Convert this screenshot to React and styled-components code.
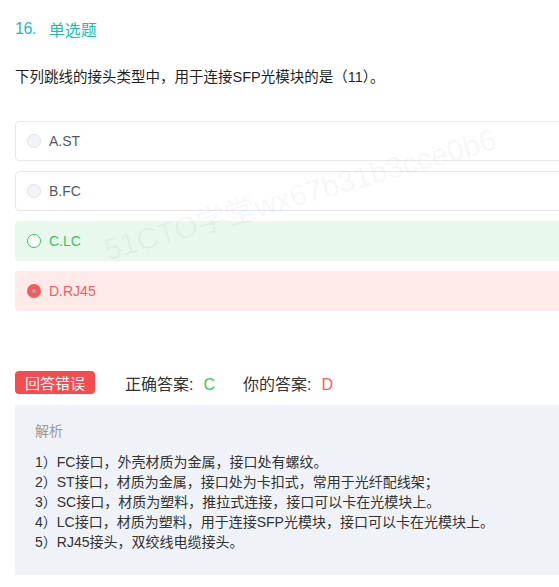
import React from "react";
import styled, { createGlobalStyle } from "styled-components";

const GlobalStyle = createGlobalStyle`
  html, body {
    margin: 0;
    padding: 0;
    background: #fff;
    overflow: hidden;
  }
  body {
    font-family: "Liberation Sans", "Noto Sans CJK SC", sans-serif;
  }
`;

const options = [
  { key: "A", label: "A.ST", state: "idle" },
  { key: "B", label: "B.FC", state: "idle" },
  { key: "C", label: "C.LC", state: "right" },
  { key: "D", label: "D.RJ45", state: "wrong" },
];

const analysis = [
  "1）FC接口，外壳材质为金属，接口处有螺纹。",
  "2）ST接口，材质为金属，接口处为卡扣式，常用于光纤配线架；",
  "3）SC接口，材质为塑料，推拉式连接，接口可以卡在光模块上。",
  "4）LC接口，材质为塑料，用于连接SFP光模块，接口可以卡在光模块上。",
  "5）RJ45接头，双绞线电缆接头。",
];

const App = () => {
  return (
    <>
      <GlobalStyle />
      <Page>
        <Title>
          <span className="num">16.</span>
          <span>单选题</span>
        </Title>
        <Question>下列跳线的接头类型中，用于连接SFP光模块的是（11）。</Question>
        <OptionList>
          {options.map((o) => (
            <Option key={o.key} state={o.state}>
              <Radio state={o.state} />
              <span>{o.label}</span>
            </Option>
          ))}
        </OptionList>
        <ResultRow>
          <Badge>回答错误</Badge>
          <Answer>
            正确答案:<Mark color="#3cc35a">C</Mark>
          </Answer>
          <Answer>
            你的答案:<Mark color="#f65c5e">D</Mark>
          </Answer>
        </ResultRow>
        <Analysis>
          <h4>解析</h4>
          {analysis.map((line) => (
            <p key={line}>{line}</p>
          ))}
        </Analysis>
        <Watermark>51CTO学堂wx67b31b3cce0b6</Watermark>
      </Page>
    </>
  );
};

const Page = styled.div`
  position: relative;
  width: 780px;
  padding: 17px 0 12px 15px;
  color: #222;
`;

const Title = styled.div`
  display: flex;
  align-items: center;
  gap: 13px;
  height: 24px;
  font-size: 16px;
  color: #1dbcb3;
  .num {
    font-family: "Liberation Sans", sans-serif;
    letter-spacing: -0.5px;
  }
`;

const Question = styled.div`
  margin-top: 26px;
  font-size: 14.5px;
  line-height: 20px;
  color: #1f1f1f;
`;

const OptionList = styled.div`
  margin-top: 34px;
  display: flex;
  flex-direction: column;
  gap: 10px;
`;

const Option = styled.div`
  box-sizing: border-box;
  height: 40px;
  display: flex;
  align-items: center;
  gap: 8px;
  padding-left: 11px;
  border-radius: 4px;
  font-size: 14px;
  border: 1px solid
    ${(p) => (p.state === "idle" ? "#e6e8f0" : "transparent")};
  background: ${(p) =>
    p.state === "right" ? "#e9f8ec" : p.state === "wrong" ? "#ffeaea" : "#fff"};
  color: ${(p) =>
    p.state === "right" ? "#3cc35a" : p.state === "wrong" ? "#f65c5e" : "#555a63"};
`;

const Radio = styled.span`
  position: relative;
  box-sizing: border-box;
  width: 14px;
  height: 14px;
  border-radius: 50%;
  flex-shrink: 0;
  border: ${(p) =>
    p.state === "right"
      ? "1.5px solid #3cc35a"
      : p.state === "wrong"
      ? "none"
      : "1px solid #dfe2ea"};
  background: ${(p) =>
    p.state === "wrong" ? "#f65c5e" : p.state === "right" ? "#fff" : "#f2f4f8"};
  &::after {
    content: "";
    display: ${(p) => (p.state === "wrong" ? "block" : "none")};
    position: absolute;
    left: 5px;
    top: 5px;
    width: 4px;
    height: 4px;
    border-radius: 50%;
    background: #a9a9a9;
  }
`;

const ResultRow = styled.div`
  margin-top: 60px;
  display: flex;
  align-items: center;
  height: 23px;
`;

const Badge = styled.span`
  box-sizing: border-box;
  width: 80px;
  height: 23px;
  border-radius: 4px;
  background: #f54d4f;
  color: #fff;
  font-size: 15px;
  display: flex;
  align-items: center;
  justify-content: center;
  margin-right: 30px;
`;

const Answer = styled.span`
  font-size: 16px;
  color: #333;
  margin-right: 28px;
`;

const Mark = styled.span`
  color: ${(p) => p.color};
  margin-left: 10px;
  font-family: "Liberation Sans", sans-serif;
`;

const Analysis = styled.div`
  margin-top: 11px;
  box-sizing: border-box;
  height: 170px;
  background: #eff2f7;
  padding: 16px 20px;
  h4 {
    margin: 0 0 11px;
    font-weight: normal;
    font-size: 14px;
    line-height: 20px;
    color: #999;
  }
  p {
    margin: 0;
    font-size: 14px;
    line-height: 20px;
    color: #333;
  }
`;

const Watermark = styled.div`
  position: absolute;
  left: 104px;
  top: 226px;
  font-size: 30px;
  color: rgba(0, 0, 0, 0.05);
  white-space: nowrap;
  transform: rotate(-16deg);
  transform-origin: left center;
  pointer-events: none;
`;

export default App;
